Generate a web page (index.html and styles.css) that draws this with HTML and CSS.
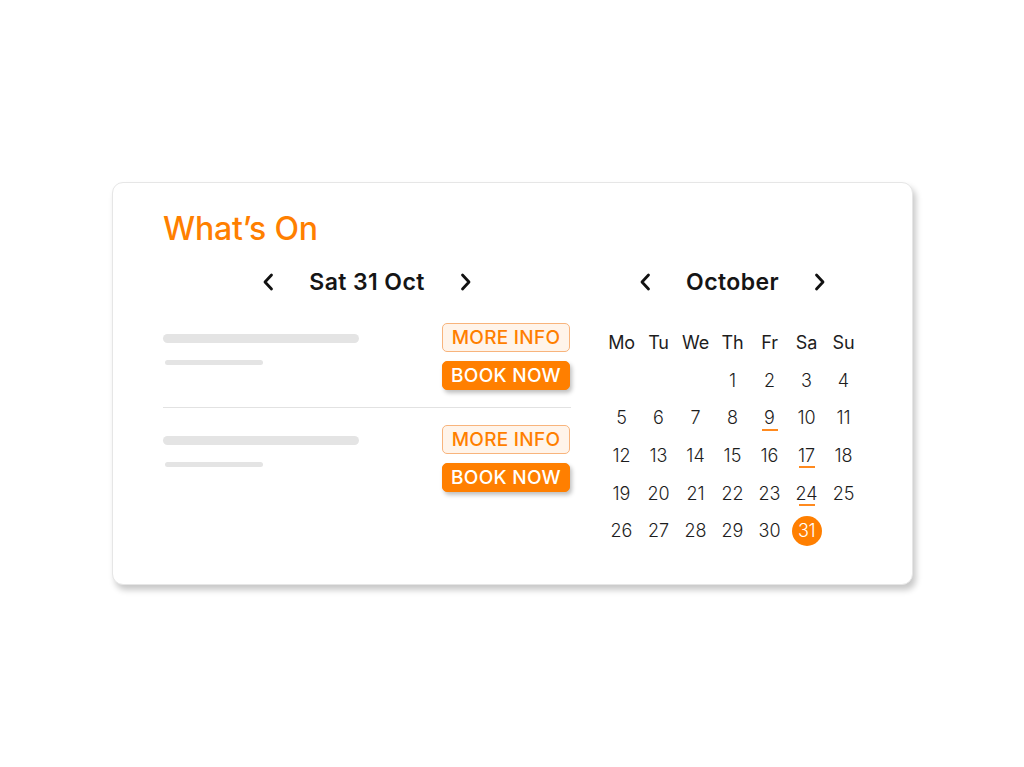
FILE: index.html
```html
<!DOCTYPE html>
<html lang="en">
<head>
<meta charset="utf-8">
<title>What's On</title>
<link rel="stylesheet" href="styles.css">
</head>
<body>
<div class="card">
  <h1 class="title">What’s On</h1>
  <div class="columns">
    <section class="events">
      <div class="nav">
        <svg class="chev" viewBox="0 0 12 18"><path d="M9.5 2 L3 9 L9.5 16"/></svg>
        <span class="nav-label">Sat 31 Oct</span>
        <svg class="chev" viewBox="0 0 12 18"><path d="M2.5 2 L9 9 L2.5 16"/></svg>
      </div>
      <div class="event">
        <div class="lines">
          <span class="line long"></span>
          <span class="line short"></span>
        </div>
        <div class="actions">
          <button class="btn outline">MORE INFO</button>
          <button class="btn solid">BOOK NOW</button>
        </div>
      </div>
      <div class="event">
        <div class="lines">
          <span class="line long"></span>
          <span class="line short"></span>
        </div>
        <div class="actions">
          <button class="btn outline">MORE INFO</button>
          <button class="btn solid">BOOK NOW</button>
        </div>
      </div>
    </section>
    <section class="calendar">
      <div class="nav">
        <svg class="chev" viewBox="0 0 12 18"><path d="M9.5 2 L3 9 L9.5 16"/></svg>
        <span class="nav-label">October</span>
        <svg class="chev" viewBox="0 0 12 18"><path d="M2.5 2 L9 9 L2.5 16"/></svg>
      </div>
      <div class="grid">
        <span class="wd">Mo</span><span class="wd">Tu</span><span class="wd">We</span><span class="wd">Th</span><span class="wd">Fr</span><span class="wd">Sa</span><span class="wd">Su</span>
        <span></span><span></span><span></span>
        <span class="day">1</span><span class="day">2</span><span class="day">3</span><span class="day">4</span>
        <span class="day">5</span><span class="day">6</span><span class="day">7</span><span class="day">8</span><span class="day mark">9</span><span class="day">10</span><span class="day">11</span>
        <span class="day">12</span><span class="day">13</span><span class="day">14</span><span class="day">15</span><span class="day">16</span><span class="day mark">17</span><span class="day">18</span>
        <span class="day">19</span><span class="day">20</span><span class="day">21</span><span class="day">22</span><span class="day">23</span><span class="day mark">24</span><span class="day">25</span>
        <span class="day">26</span><span class="day">27</span><span class="day">28</span><span class="day">29</span><span class="day">30</span><span class="day"><span class="sel">31</span></span>
      </div>
    </section>
  </div>
</div>
</body>
</html>
```

FILE: styles.css
```css
* { box-sizing: border-box; }

html, body {
  margin: 0;
  padding: 0;
  background: #ffffff;
}

body {
  font-family: "Inter", "Liberation Sans", sans-serif;
  color: #1b1b1b;
  width: 1024px;
  height: 767px;
  overflow: hidden;
}

.card {
  width: 801px;
  height: 403px;
  margin: 182px 0 0 112px;
  padding: 26px 50px 0 50px;
  background: #fff;
  border: 1px solid #e6e6e6;
  border-radius: 11px;
  box-shadow: 3px 5px 6px rgba(0, 0, 0, 0.22);
}

.title {
  margin: 0;
  font-size: 32px;
  font-weight: 500;
  line-height: 40px;
  letter-spacing: -0.2px;
  color: #ff7f00;
}

.columns {
  display: flex;
  gap: 32px;
  margin-top: 16px;
}

.events {
  width: 409px;
}

.calendar {
  width: 259px;
}

.nav {
  display: flex;
  align-items: center;
  justify-content: center;
  gap: 35px;
  height: 34px;
}

.nav-label {
  font-size: 23px;
  font-weight: 600;
  letter-spacing: 0.4px;
  color: #151515;
}

.chev {
  width: 12px;
  height: 18px;
}

.chev path {
  fill: none;
  stroke: #111;
  stroke-width: 2.8;
  stroke-linecap: round;
  stroke-linejoin: round;
}

.events .nav { margin-bottom: 24px; }

.event {
  display: flex;
  justify-content: space-between;
  align-items: flex-start;
  padding: 0 1px 17px 0;
}

.event + .event {
  border-top: 1px solid #e2e2e2;
  padding-top: 17px;
}

.lines {
  display: flex;
  flex-direction: column;
  gap: 17px;
  padding-top: 11px;
}

.line {
  display: block;
  background: #e4e4e4;
  border-radius: 5px;
}

.line.long { width: 196px; height: 9px; }
.line.short { width: 98px; height: 5px; margin-left: 2px; border-radius: 3px; }

.actions {
  display: flex;
  flex-direction: column;
  gap: 9px;
}

.btn {
  width: 128px;
  height: 29px;
  padding: 0;
  border-radius: 5px;
  font-family: inherit;
  font-size: 19px;
  font-weight: 500;
  letter-spacing: 0.3px;
  line-height: 27px;
  text-align: center;
}

.btn.outline {
  background: #fff4ea;
  border: 1px solid #f8b47c;
  color: #ff7f00;
}

.btn.solid {
  background: #ff7f00;
  border: 1px solid #ff7f00;
  color: #fff;
  box-shadow: 2px 3px 4px rgba(0, 0, 0, 0.25);
}

.calendar .nav { margin-bottom: 25px; }

.grid {
  display: grid;
  grid-template-columns: repeat(7, 37px);
  grid-auto-rows: 37.6px;
}

.grid > span {
  display: flex;
  align-items: center;
  justify-content: center;
  font-size: 18px;
  font-weight: 300;
  color: #1d1d1d;
}

.grid > .wd {
  font-weight: 400;
  letter-spacing: -0.2px;
}

.day.mark {
  position: relative;
}

.day.mark::after {
  content: "";
  position: absolute;
  left: 50%;
  bottom: 6px;
  width: 16px;
  height: 2px;
  margin-left: -8px;
  background: #ff8a1f;
}

.sel {
  width: 30px;
  height: 30px;
  border-radius: 50%;
  background: #ff7f00;
  color: #fff;
  display: flex;
  align-items: center;
  justify-content: center;
  font-size: 18px;
  letter-spacing: -0.5px;
}
```
